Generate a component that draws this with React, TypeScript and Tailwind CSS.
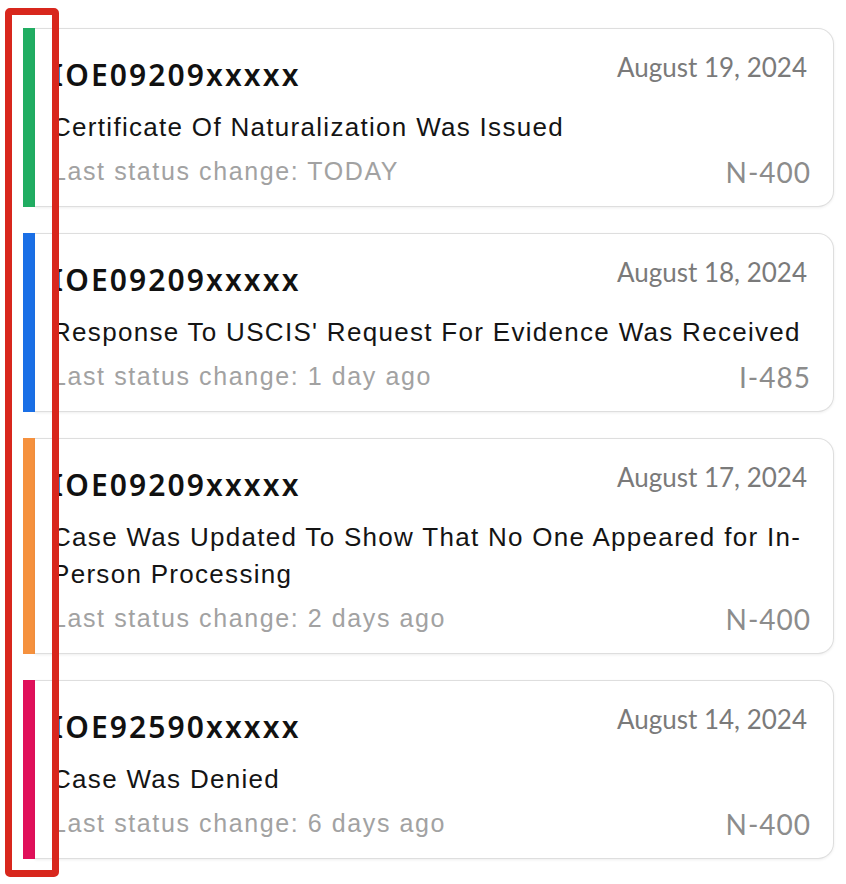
import React from "react";

type Item = {
  id: string;
  date: string;
  title: string;
  last: string;
  form: string;
  color: string;
};

const items: Item[] = [
  {
    id: "IOE09209xxxxx",
    date: "August 19, 2024",
    title: "Certificate Of Naturalization Was Issued",
    last: "Last status change: TODAY",
    form: "N-400",
    color: "bg-[#21ad62]",
  },
  {
    id: "IOE09209xxxxx",
    date: "August 18, 2024",
    title: "Response To USCIS' Request For Evidence Was Received",
    last: "Last status change: 1 day ago",
    form: "I-485",
    color: "bg-[#1a6fe6]",
  },
  {
    id: "IOE09209xxxxx",
    date: "August 17, 2024",
    title: "Case Was Updated To Show That No One Appeared for In-Person Processing",
    last: "Last status change: 2 days ago",
    form: "N-400",
    color: "bg-[#f5913e]",
  },
  {
    id: "IOE92590xxxxx",
    date: "August 14, 2024",
    title: "Case Was Denied",
    last: "Last status change: 6 days ago",
    form: "N-400",
    color: "bg-[#e0105a]",
  },
];

function Card({ item }: { item: Item }) {
  return (
    <div className="flex ml-[23px] mr-[12px]">
      <div className={`w-[12px] shrink-0 ${item.color}`} />
      <div className="flex-1 border-y-[1.5px] border-r-[1.5px] border-[#dedede] rounded-r-[16px] shadow-[0_1px_3px_rgba(0,0,0,0.07)] pl-[17px] pr-[22px] pt-[28px] pb-[18px] bg-white">
        <div className="flex items-start justify-between">
          <div className="text-[30px] leading-[36px] font-semibold text-[#111] font-['Noto_Sans',sans-serif] tracking-[2.1px]">
            {item.id}
          </div>
          <div className="text-[26px] leading-[30px] text-[#7a7a7a] font-['Lato',sans-serif] mt-[-5px] mr-[4px]">
            {item.date}
          </div>
        </div>
        <div className="mt-[16px] text-[26px] leading-[37px] tracking-[1.3px] text-[#141414] font-['Liberation_Sans',Arial,sans-serif]">
          {item.title}
        </div>
        <div className="mt-[10px] flex items-center justify-between h-[32px]">
          <div className="text-[25px] tracking-[1.6px] text-[#a2a2a2] font-['Liberation_Sans',Arial,sans-serif]">
            {item.last}
          </div>
          <div className="text-[28px] text-[#8c8c8c] font-['Lato',sans-serif] tracking-[1px]">
            {item.form}
          </div>
        </div>
      </div>
    </div>
  );
}

export default function App() {
  return (
    <div className="relative w-[846px] h-[884px] overflow-hidden bg-white">
      <div className="flex flex-col gap-[26px] pt-[28px]">
        {items.map((it, i) => (
          <Card key={i} item={it} />
        ))}
        <div className="flex ml-[23px] mr-[12px] h-[178px]">
          <div className="w-[12px] shrink-0 bg-[#21ad62]" />
          <div className="flex-1 border-y-[1.5px] border-r-[1.5px] border-[#dedede] rounded-r-[16px] bg-white" />
        </div>
      </div>
      <div className="absolute left-[5px] top-[8px] w-[54px] h-[869px] border-[7px] border-[#d8271d] rounded-[5px]" />
    </div>
  );
}
